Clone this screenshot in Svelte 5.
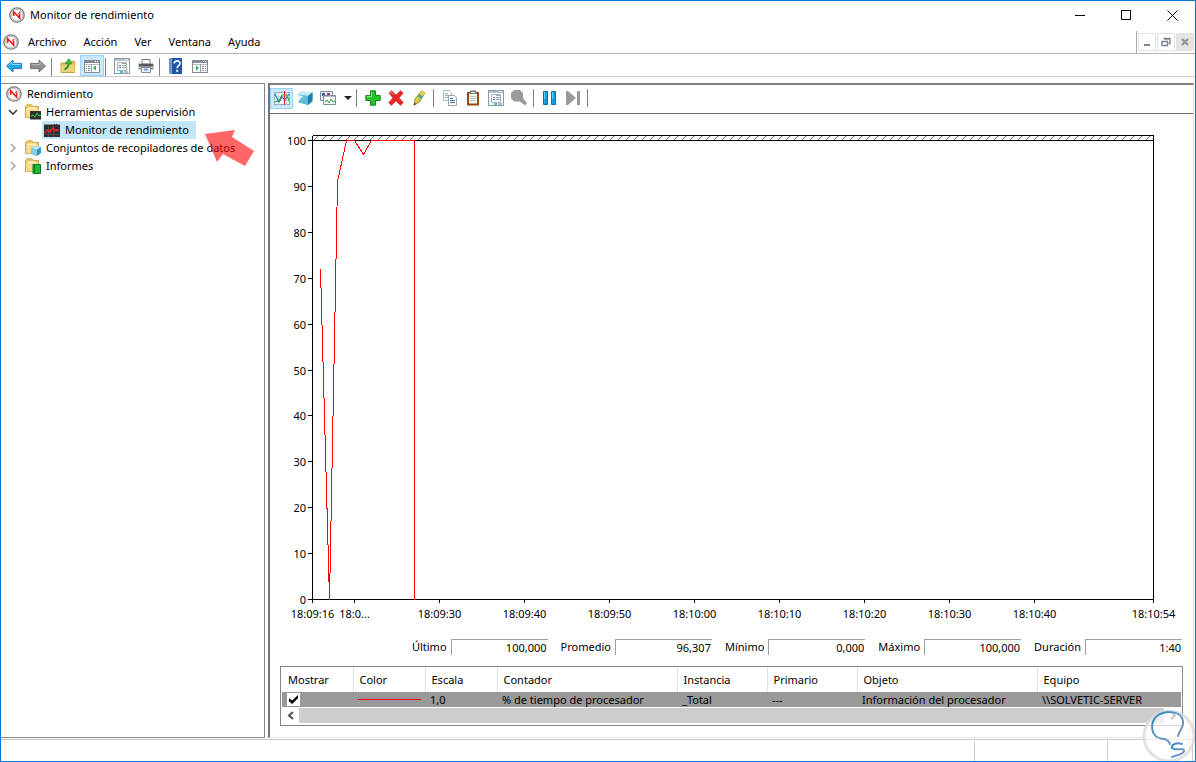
<script>
  const menus = ["Archivo", "Acción", "Ver", "Ventana", "Ayuda"];

  const mainTools = [
    [["back", "Atrás"], ["forward", "Adelante"]],
    [["up", "Subir un nivel"], ["tree", "Mostrar árbol de consola", true]],
    [["props", "Propiedades"], ["print", "Imprimir"]],
    [["help", "Ayuda"], ["actions", "Mostrar panel de acciones"]]
  ];

  const chartTools = [
    [["graph", "Ver actividad actual", true], ["cube", "Ver datos del registro"], ["type", "Cambiar tipo de gráfico"], ["caret", "Tipos de gráfico"]],
    [["add", "Agregar"], ["remove", "Eliminar"], ["highlight", "Resaltar"]],
    [["copy", "Copiar propiedades"], ["paste", "Pegar lista"], ["props", "Propiedades"], ["zoom", "Zoom"]],
    [["pause", "Inmovilizar pantalla"], ["next", "Actualizar datos"]]
  ];

  const stats = [
    ["ultimo", "Último", "100,000"],
    ["promedio", "Promedio", "96,307"],
    ["minimo", "Mínimo", "0,000"],
    ["maximo", "Máximo", "100,000"],
    ["duracion", "Duración", "1:40"]
  ];

  // sample slot on the axis -> label
  const times = [
    [0, "18:09:16"], [5, "18:0..."], [15, "18:09:30"], [25, "18:09:40"], [35, "18:09:50"], [45, "18:10:00"],
    [55, "18:10:10"], [65, "18:10:20"], [75, "18:10:30"], [85, "18:10:40"], [99, "18:10:54"]
  ];

  const values = [0, 10, 20, 30, 40, 50, 60, 70, 80, 90, 100];
  const samples = [[1, 72], [2, 0], [3, 91], [4, 100], [5, 100], [6, 97], [7, 100], [12, 100], [12, 0]];

  let checked = true;
  let w = 923;
  let h = 516;

  const left = 42;
  const top = 26;

  $: right = w - 40;
  $: bottom = h - 31;
  $: sx = (slot) => Math.round(left + (slot / 99) * (right - left)) + 0.5;
  $: sy = (v) => Math.round(bottom - (v / 100) * (bottom - top)) + 0.5;
  $: line = samples.map(([s, v]) => `${sx(s)},${sy(v)}`).join(" ");
</script>

{#snippet icon(name)}
  <svg class="icon" viewBox="0 0 16 16" width="16" height="16" aria-hidden="true">
    {#if name === "perf"}
      <circle cx="8" cy="8" r="7.2" fill="#ececec" stroke="#7d7d7d" stroke-width="1.3" />
      <circle cx="8" cy="8" r="5.6" fill="#fff" stroke="#b0b0b0" stroke-width=".7" />
      <path d="M4.6 9V4.8L10.6 11V6.5" fill="none" stroke="#e81818" stroke-width="1.6" />
      <path d="M9 6.5 11.5 5" stroke="#e81818" />
    {:else if name === "back"}
      <path d="M.5 8 7 2v3.4h8.5v5.2H7V14z" fill="#21a9e6" stroke="#1b6fa3" stroke-width=".9" />
      <path d="M2.5 7.5 6 4.3V6.5h8.5" fill="none" stroke="#7fdcff" />
    {:else if name === "forward"}
      <path d="M15.5 8 9 2v3.4H.5v5.2H9V14z" fill="#8f8f8f" stroke="#666" stroke-width=".9" />
      <path d="M1.5 6.5H10V4.3L13.3 7.5" fill="none" stroke="#b8b8b8" />
    {:else if name === "up"}
      <path d="M1 5h6l1-1.5h6.5V14.5H1z" fill="#e9c45d" stroke="#b98d2c" stroke-width=".8" />
      <path d="M1.5 7h13v7h-13z" fill="#f0d078" />
      <path d="M4.5 11.5C7.5 10 8.5 8 8.6 5.2" fill="none" stroke="#1e9b2c" stroke-width="2" />
      <path d="M5.2 5.4 9 .6 12 6z" fill="#35c043" stroke="#1e8a2a" stroke-width=".6" />
    {:else if name === "tree" || name === "actions"}
      <rect x=".5" y="2.5" width="15" height="12" fill="#fff" stroke="#858b93" />
      <path d="M1 4h14" stroke="#858b93" stroke-width="2" />
      <path d="M11 3.5h1M13 3.5h1" stroke="#fff" />
      <path d="M1 6.5h14" stroke="#b9bec5" />
      {#if name === "tree"}
        <path d="M2 8.5h4M2 10.5h4M2 12.5h4" stroke="#808a96" stroke-dasharray="1 1 2" />
        <path d="M7.5 6v8" stroke="#9aa0a8" />
        <path d="M12 7.5v5L9 10z" fill="#21b24a" />
      {:else}
        <path d="M10 8.5h4M10 10.5h4M10 12.5h4" stroke="#808a96" stroke-dasharray="2 1 1" />
        <path d="M8.5 6v8" stroke="#9aa0a8" />
        <path d="M4 7.5v5l3-2.5z" fill="#21b24a" />
      {/if}
    {:else if name === "props"}
      <rect x=".5" y=".5" width="15" height="15" fill="#fff" stroke="#8b9aa6" />
      <path d="M1 2h14" stroke="#b5c0c9" stroke-width="2" />
      <path d="M11 1.5h1M13 1.5h1" stroke="#fff" />
      <path d="M3.5 4.5h9v8h-9z" fill="#f8fafc" stroke="#a8b2bb" />
      <path d="M5 7.5h2M5 9.5h2" stroke="#5b7fae" />
      <path d="M8 5.5h4M8 7.5h4M8 9.5h4" stroke="#9aa4ad" />
      <path d="M6 14h3" stroke="#35c5e8" stroke-width="2" />
      <path d="M10 14h4" stroke="#b5bcc2" stroke-width="2" />
    {:else if name === "print"}
      <path d="M4 1.5h8V6H4z" fill="#fff" stroke="#777" />
      <path d="M.5 5.5h15v6H.5z" fill="#8a8e92" />
      <path d="M1 6h14v2H1z" fill="#54585b" />
      <path d="M1 9.5h2M13 9.5h2" stroke="#ccc" />
      <path d="M3.5 9.5h9v5h-9z" fill="#e9eef2" stroke="#8a8f94" />
      <path d="M6 11.5h4" stroke="#6aa4d8" stroke-width="2" />
    {:else if name === "help"}
      <rect x="1" y="0" width="13" height="16" fill="#1d57a5" />
      <path d="M1 0h3v16H1z" fill="#7da4d6" />
      <path d="M2 1v14" stroke="#2c66b4" stroke-dasharray="1 1" />
      <path d="M6.2 5.5C6.2 2 12.2 2 12 5.4 11.9 7.6 9.1 7.6 9.1 10.2" fill="none" stroke="#fff" stroke-width="1.6" />
      <path d="M8.2 11.8h2v2h-2z" fill="#fff" />
    {:else if name === "graph"}
      <rect x=".5" y="2.5" width="15" height="12" fill="#f2fbff" stroke="#89a9c2" />
      <path d="M0 6.5h16M0 10.5h16M4.5 2v13M12.5 2v13" stroke="#b8d2e2" />
      <path d="M1 4 5 12 8 7 11 10 15 4" fill="none" stroke="#1875b8" stroke-width="1.1" />
      <path d="M1 12 5 11 8 5 13 5 15 11" fill="none" stroke="#28a745" stroke-width="1.1" />
      <path d="M10.5 1v14" stroke="#f02020" />
    {:else if name === "cube"}
      <path d="M1 4.5 5 1.5l10.5 1V11L11 15 1 12z" fill="#3fa9d0" />
      <path d="M1 4.5 5 1.5l10.5 1L11 6z" fill="#c9ecf7" />
      <path d="M11 6 15.5 2.5V11L11 15z" fill="#1f7fa8" />
      <path d="M1 4.5 11 6v9L1 12z" fill="#5fbcdc" />
      <path d="M1 5l5 1-5 6z" fill="#e4f6fc" />
    {:else if name === "type"}
      <path d="M.5 1.5h12v9H.5z" fill="#e8eef5" stroke="#7d8da0" />
      <path d="M2 3h3v3H2z" fill="#3759a8" />
      <path d="M7 3h3v2H7z" fill="#c33" />
      <path d="M3.5 5.5h12v9h-12z" fill="#fff" stroke="#7d8da0" />
      <path d="M4 6.5h11" stroke="#a9bdd2" />
      <path d="m5 12 2-2 2 3 2-4 2 3 2-1" fill="none" stroke="#2f9d4a" />
    {:else if name === "caret"}
      <path d="M4 6h8l-4 4z" fill="#222" />
    {:else if name === "add"}
      <path d="M5.5.8h5v4.7h4.7v5h-4.7v4.7h-5v-4.7H.8v-5h4.7z" fill="#25c425" stroke="#148a1c" />
      <path d="M6.5 2v4.5H2" fill="none" stroke="#8bf07d" />
    {:else if name === "remove"}
      <path d="M1 3.2 3.6.8 8 5.2 12.6.8 15 3.2 10.8 8l4.4 4.6-2.8 2.6L8 10.8l-4.6 4.4L.8 12.6 5.2 8z" fill="#ee2525" stroke="#c01c1c" stroke-width=".8" />
      <path d="m2 3.5 1.5-1.2 2 2" fill="none" stroke="#ff9d9d" />
    {:else if name === "highlight"}
      <path d="M10.5.8 14 3 8.5 12 3 15.2 4 9z" fill="#d9c94a" stroke="#84762a" stroke-width=".8" />
      <path d="M10.5.8 14 3l-2 3.3-3.7-2.1z" fill="#f2cf36" />
      <path d="m8.3 4.2 3.7 2.1-1.6 2.6L6.9 6.4z" fill="#4aa3a8" />
      <path d="M3.4 12.8 3 15.2l2.3-1.3z" fill="#333" />
    {:else if name === "copy"}
      <path d="M1.5.5h6l2 2v8h-8z" fill="#fff" stroke="#b0b8be" />
      <path d="M3 3.5h3M3 5.5h4M3 7.5h4" stroke="#7cc0b4" />
      <path d="M6.5 5.5h6l2 2v8h-8z" fill="#fff" stroke="#98a4ae" />
      <path d="M8 8.5h3M8 10.5h5M8 12.5h5" stroke="#3f7fc4" />
    {:else if name === "paste"}
      <path d="M2 2h12v13.5H2z" fill="#8f4a16" />
      <path d="M4 3.5h8v10H4z" fill="#f4faf8" />
      <path d="M5 6.5h6M5 8.5h6M5 10.5h6" stroke="#b6c6c2" />
      <path d="M5 .5h6V4H5z" fill="#777" />
      <path d="M6 2.5h4" stroke="#eee" />
    {:else if name === "zoom"}
      <path d="M3 0h6l3 3v5l4 5-2 2.5-5-4H3L0 8.5V3z" fill="#9a9a9a" />
    {:else if name === "pause"}
      <path d="M1.5 1.5h4v13h-4zM9.5 1.5h4v13h-4z" fill="#159fe3" stroke="#0c6eab" />
      <path d="M2.5 2v7M10.5 2v7" stroke="#5fd0ff" />
    {:else if name === "next"}
      <path d="M1 1h2l8 7-8 7H1zM12 1h3v14h-3z" fill="#9a9a9a" />
    {:else if name === "monitor"}
      <path d="M0 2h16v13H0z" fill="#2c2c30" />
      <path d="M0 2.5h16" stroke="#8b8b90" stroke-dasharray="10 1 1 1" />
      <path d="M1 7.5h14M1 12.5h14M4.5 4v11M9.5 4v11" stroke="#505055" />
      <path d="m1 11 3-3 2 2 3-4 2 3 4-1" fill="none" stroke="#f02020" stroke-width="1.5" />
    {:else}
      <path d="M.5 2.5 2 .8h5L8.5 2.5h5v11H.5z" fill="#ecc561" stroke="#c39a3d" stroke-width=".8" />
      <path d="M2.5 3.5h9v9h-9z" fill="#fff7dc" />
      <path d="M1 5h12.5v8.2H1z" fill="#f8dd90" />
      {#if name === "folder-mon"}
        <path d="M5 7h11v8.5H5z" fill="#2d3230" />
        <path d="m6 12 2-1 2 2 2-4 1.5 2.5H16" fill="none" stroke="#39d353" />
      {:else if name === "folder-cube"}
        <path d="m6 8 4-2 6 1v6l-4 3-6-2z" fill="#2f94c4" />
        <path d="m6 8 4-2 6 1-4 2.5z" fill="#c8ecf8" />
        <path d="m6 8 6 1.5V16l-6-2z" fill="#86cde8" />
      {:else}
        <path d="M8 6.5h7.5v9H8z" fill="#1dbb32" stroke="#0a7a1c" />
        <path d="M9.5 7v8" stroke="#0a7a1c" />
      {/if}
    {/if}
  </svg>
{/snippet}

{#snippet toolbar(groups)}
  {#each groups as group, i}
    {#each group as [name, label, on]}
      <button class="tool" class:on class:narrow={name === "caret"} aria-label={label}>{@render icon(name)}</button>
    {/each}
    {#if i < groups.length - 1 || groups === chartTools}
      <span class="sep"></span>
    {/if}
  {/each}
{/snippet}

<div class="window">
  <header class="title">
    {@render icon("perf")}
    <h1>Monitor de rendimiento</h1>
    <div class="caption">
      <button aria-label="Minimizar"><svg width="11" height="11"><path d="M0 5.5h10" /></svg></button>
      <button aria-label="Maximizar"><svg width="11" height="11"><path d="M.5.5h9v9h-9z" /></svg></button>
      <button aria-label="Cerrar"><svg width="11" height="11"><path d="m.5.5 10 10m0-10-10 10" /></svg></button>
    </div>
  </header>

  <nav class="menubar">
    {@render icon("perf")}
    {#each menus as m}
      <button class="menu">{m}</button>
    {/each}
    <div class="mdi">
      <button aria-label="Minimizar ventana"><svg width="10" height="10"><path d="M2 8h6" stroke-width="2" /></svg></button>
      <button aria-label="Restaurar ventana">
        <svg width="10" height="10"><path d="M3 2V1.5h6v5H7.5M1 4.5h5.5v4H1zM3 2h6" stroke-width="1.4" /></svg>
      </button>
      <button class="off" aria-label="Cerrar ventana"><svg width="10" height="10"><path d="m2 2 6 6m0-6L2 8" stroke-width="2.4" /></svg></button>
    </div>
  </nav>

  <div class="bar main-bar">{@render toolbar(mainTools)}</div>

  <main>
    <aside>
      <ul class="tree">
        <li class="root">{@render icon("perf")}<span>Rendimiento</span></li>
        <li>
          <svg class="chev" width="10" height="10"><path d="m1 3 4 4 4-4" stroke="#404040" stroke-width="1.6" /></svg>
          {@render icon("folder-mon")}<span>Herramientas de supervisión</span>
        </li>
        <li class="child"><a href="#monitor">{@render icon("monitor")}<span>Monitor de rendimiento</span></a></li>
        <li>
          <svg class="chev" width="10" height="10"><path d="m3 1 4 4-4 4" stroke="#a0a0a0" stroke-width="1.4" /></svg>
          {@render icon("folder-cube")}<span>Conjuntos de recopiladores de datos</span>
        </li>
        <li>
          <svg class="chev" width="10" height="10"><path d="m3 1 4 4-4 4" stroke="#a0a0a0" stroke-width="1.4" /></svg>
          {@render icon("folder-report")}<span>Informes</span>
        </li>
      </ul>
      <svg class="pointer" width="50" height="38" viewBox="0 0 50 38" aria-hidden="true">
        <path d="M0 5 30 1 27 8 49 22 40 37 18 25 12 33z" />
      </svg>
    </aside>

    <section>
      <div class="bar chart-bar">{@render toolbar(chartTools)}</div>

      <div class="chart" bind:clientWidth={w} bind:clientHeight={h}>
        <svg width={w} height={h}>
          <defs>
            <pattern id="hatch" width="8" height="5" patternUnits="userSpaceOnUse" x={left} y={top - 5}>
              <path d="M2 5 7 0" stroke="#777" />
            </pattern>
          </defs>
          <rect x={left} y={top - 5} width={right - left} height="5" fill="url(#hatch)" />
          <path class="axis" d="M{left + 0.5} {top - 4.5}H{right + 0.5}V{bottom + 4}M{left + 0.5} {top - 4.5}V{bottom + 4}M{left} {top + 0.5}H{right}M{left} {bottom + 0.5}H{right}" />
          {#each values as v}
            <path class="axis" d="M{left - 4} {sy(v)}h4" />
            <text x={left - 6} y={sy(v) + 4} text-anchor="end">{v}</text>
          {/each}
          {#each times as [slot, label]}
            <path class="axis" d="M{sx(slot)} {bottom}v4" />
            <text x={sx(slot)} y={bottom + 19} text-anchor="middle">{label}</text>
          {/each}
          <polyline points={line} />
        </svg>
      </div>

      <div class="stats">
        {#each stats as [id, label, value]}
          <div class="stat">
            <label for={id}>{label}</label>
            <input {id} readonly {value} />
          </div>
        {/each}
      </div>

      <div class="legend">
        <table>
          <colgroup>
            <col class="first" /><col class="s" /><col class="s" /><col class="l" /><col class="m" /><col class="m" /><col class="l" /><col />
          </colgroup>
          <thead>
            <tr>
              <th>Mostrar</th><th>Color</th><th>Escala</th><th>Contador</th><th>Instancia</th><th>Primario</th><th>Objeto</th><th>Equipo</th>
            </tr>
          </thead>
          <tbody>
            <tr>
              <td><input type="checkbox" aria-label="Mostrar contador" bind:checked /></td>
              <td><hr /></td>
              <td>1,0</td>
              <td>% de tiempo de procesador</td>
              <td>_Total</td>
              <td>---</td>
              <td>Información del procesador</td>
              <td>\\SOLVETIC-SERVER</td>
            </tr>
          </tbody>
        </table>
        <div class="scroll">
          <button aria-label="Desplazar a la izquierda"><svg width="8" height="9"><path d="M6 1 2 4.5 6 8" /></svg></button>
          <div class="thumb"></div>
          <button aria-label="Desplazar a la derecha"><svg width="8" height="9"><path d="m2 1 4 3.5L2 8" /></svg></button>
        </div>
      </div>
    </section>
  </main>

  <footer><span></span><span></span><span></span></footer>

  <svg class="mark" width="54" height="54" viewBox="0 0 54 54" aria-hidden="true">
    <defs>
      <linearGradient id="bulb" x1="0" y1="0" x2="1" y2="1">
        <stop offset="0" stop-color="#2f86b5" />
        <stop offset=".5" stop-color="#5f9dcb" />
        <stop offset="1" stop-color="#8f84c4" />
      </linearGradient>
    </defs>
    <circle cx="27" cy="27" r="25" fill="#fff" fill-opacity=".68" stroke="#d5d8dd" stroke-opacity=".75" stroke-width="3" />
    <path d="M36 27C37 21 44 17 40 9 36 1 22 2 15 7 8 13 9 24 15 28c5 3 10 0 13 7" />
    <path d="M40 35C34 33 29 36 30 39c2 3 13-1 12 3-1 4-7 4-12 6" />
  </svg>
</div>

<style>
  :global(body) {
    margin: 0;
    background: #fff;
  }

  .window {
    position: relative;
    box-sizing: border-box;
    display: flex;
    flex-direction: column;
    min-height: 100vh;
    border: 1px solid #0078d7;
    background: #fff;
    color: #000;
    font: 11px/18px "Noto Sans", "Open Sans", sans-serif;
    overflow: hidden;
  }

  button,
  input {
    margin: 0;
    padding: 0;
    border: none;
    background: none;
    color: inherit;
    font: inherit;
  }

  .icon {
    display: block;
    flex: none;
  }

  .title {
    display: flex;
    align-items: center;
    gap: 5px;
    height: 28px;
    padding-left: 8px;
  }

  h1 {
    margin: 0;
    font: inherit;
  }

  .caption {
    display: flex;
    align-self: stretch;
    margin-left: auto;
  }

  .caption button {
    display: grid;
    place-items: center;
    width: 46px;
  }

  .caption path {
    fill: none;
    stroke: #000;
  }

  .menubar {
    box-sizing: border-box;
    display: flex;
    align-items: center;
    gap: 1px;
    height: 25px;
    padding: 2px 1px 0 2px;
    border-bottom: 1px solid #b4b4b4;
  }

  .menu {
    padding: 0 8px;
  }

  .mdi {
    display: flex;
    align-items: center;
    align-self: stretch;
    gap: 1px;
    margin-left: auto;
    padding-left: 1px;
    border-left: 1px solid #a8a8a8;
  }

  .mdi button {
    box-sizing: border-box;
    display: grid;
    place-items: center;
    width: 18px;
    height: 18px;
    border: 1px solid #e2e2e2;
  }

  .mdi .off {
    background: #e4e4e4;
  }

  .mdi path {
    fill: none;
    stroke: #7a8494;
  }

  .mdi .off path {
    stroke: #959595;
  }

  .bar {
    display: flex;
    align-items: center;
  }

  .main-bar {
    align-items: flex-end;
    height: 22px;
    padding-left: 1px;
    border-bottom: 1px solid #ccc;
  }

  .tool {
    box-sizing: border-box;
    display: grid;
    place-items: center;
    width: 24px;
    height: 21px;
    border: 1px solid transparent;
  }

  .tool.on {
    background: #cce8ff;
    border-color: #99d1ff;
  }

  .sep {
    width: 1px;
    height: 18px;
    margin: 0 4px 0 1px;
    background: #808080;
  }

  main {
    flex: 1;
    display: flex;
    gap: 3px;
    padding: 6px 1px 1px 0;
  }

  aside {
    position: relative;
    box-sizing: border-box;
    flex: none;
    width: 264px;
    border: 1px solid #828790;
    border-left: none;
  }

  .tree {
    margin: 0;
    padding: 1px 0 0 7px;
    list-style: none;
  }

  .tree li {
    display: flex;
    align-items: center;
    gap: 5px;
    height: 18px;
    white-space: nowrap;
  }

  .tree .root {
    margin-left: -2px;
  }

  .tree .child {
    padding-left: 34px;
  }

  .tree a {
    display: flex;
    align-items: center;
    gap: 5px;
    padding: 0 7px 0 2px;
    background: #c2e7fb;
    color: inherit;
    text-decoration: none;
  }

  .chev {
    flex: none;
    margin-right: 2px;
  }

  .chev path {
    fill: none;
  }

  .pointer {
    position: absolute;
    left: 204px;
    top: 45px;
  }

  .pointer path {
    fill: #f00;
    fill-opacity: 0.6;
  }

  section {
    flex: 1;
    min-width: 0;
    display: flex;
    flex-direction: column;
    border: 1px solid #e3e3e3;
    border-top: 2px solid #808080;
    border-left: 2px solid #757575;
  }

  .chart-bar {
    height: 26px;
    padding-bottom: 2px;
    border-bottom: 1px solid #696969;
  }

  .chart-bar .tool {
    width: 23px;
  }

  .chart-bar .narrow {
    width: 14px;
  }

  .chart-bar .sep {
    margin-left: 3px;
  }

  .chart {
    flex: 1;
    min-height: 200px;
    overflow: hidden;
  }

  .chart svg {
    display: block;
  }

  .axis {
    fill: none;
    stroke: #000;
    shape-rendering: crispEdges;
  }

  polyline {
    fill: none;
    stroke: #f00;
    shape-rendering: crispEdges;
  }

  .stats {
    display: flex;
    justify-content: flex-end;
    gap: 13px;
    padding: 9px 11px 11px;
  }

  .stat {
    display: flex;
    align-items: center;
    gap: 4px;
    height: 16px;
  }

  .stat input {
    box-sizing: border-box;
    width: 97px;
    height: 16px;
    padding-right: 1px;
    border-top: 1px solid #a0a0a0;
    border-left: 1px solid #a0a0a0;
    text-align: right;
  }

  .legend {
    margin: 0 10px 11px;
    padding: 0 1px 2px;
    border: 1px solid #828790;
  }

  table {
    width: 100%;
    table-layout: fixed;
    border-collapse: collapse;
    white-space: nowrap;
  }

  .first {
    width: 71px;
  }

  .s {
    width: 72px;
  }

  .m {
    width: 90px;
  }

  .l {
    width: 180px;
  }

  th {
    height: 25px;
    padding: 0 0 0 6px;
    border-right: 1px solid #e0e0e0;
    font-weight: normal;
    text-align: left;
  }

  th:last-child {
    border-right: none;
  }

  td {
    height: 15px;
    padding: 0 0 0 5px;
    background: #999;
    line-height: 15px;
    overflow: hidden;
  }

  td input {
    appearance: none;
    display: grid;
    place-items: center;
    width: 13px;
    height: 13px;
    background: #fff;
  }

  td input:checked::before {
    content: "";
    width: 9px;
    height: 9px;
    background: #000;
    clip-path: polygon(0 35%, 35% 60%, 100% 0, 100% 35%, 35% 100%, 0 70%);
  }

  hr {
    margin: 0 4px 0 0;
    border: none;
    border-top: 1px solid #f00;
  }

  .scroll {
    display: flex;
    margin-top: 1px;
  }

  .scroll button {
    display: grid;
    place-items: center;
    width: 17px;
    height: 15px;
  }

  .scroll path {
    fill: none;
    stroke: #505050;
    stroke-width: 2;
  }

  .thumb {
    flex: 1;
    background: #cdcdcd;
  }

  footer {
    display: flex;
    justify-content: flex-end;
    height: 21px;
    border-top: 1px solid #c4c4c4;
  }

  footer span {
    box-sizing: border-box;
    width: 133px;
    margin-top: 1px;
    border-left: 1px solid #ccc;
  }

  footer span:nth-child(2) {
    width: 85px;
  }

  footer span:last-child {
    width: 3px;
  }

  .mark {
    position: absolute;
    right: -1px;
    bottom: -2px;
  }

  .mark path {
    fill: none;
    stroke: url(#bulb);
    stroke-width: 2;
    stroke-linecap: round;
  }
</style>
